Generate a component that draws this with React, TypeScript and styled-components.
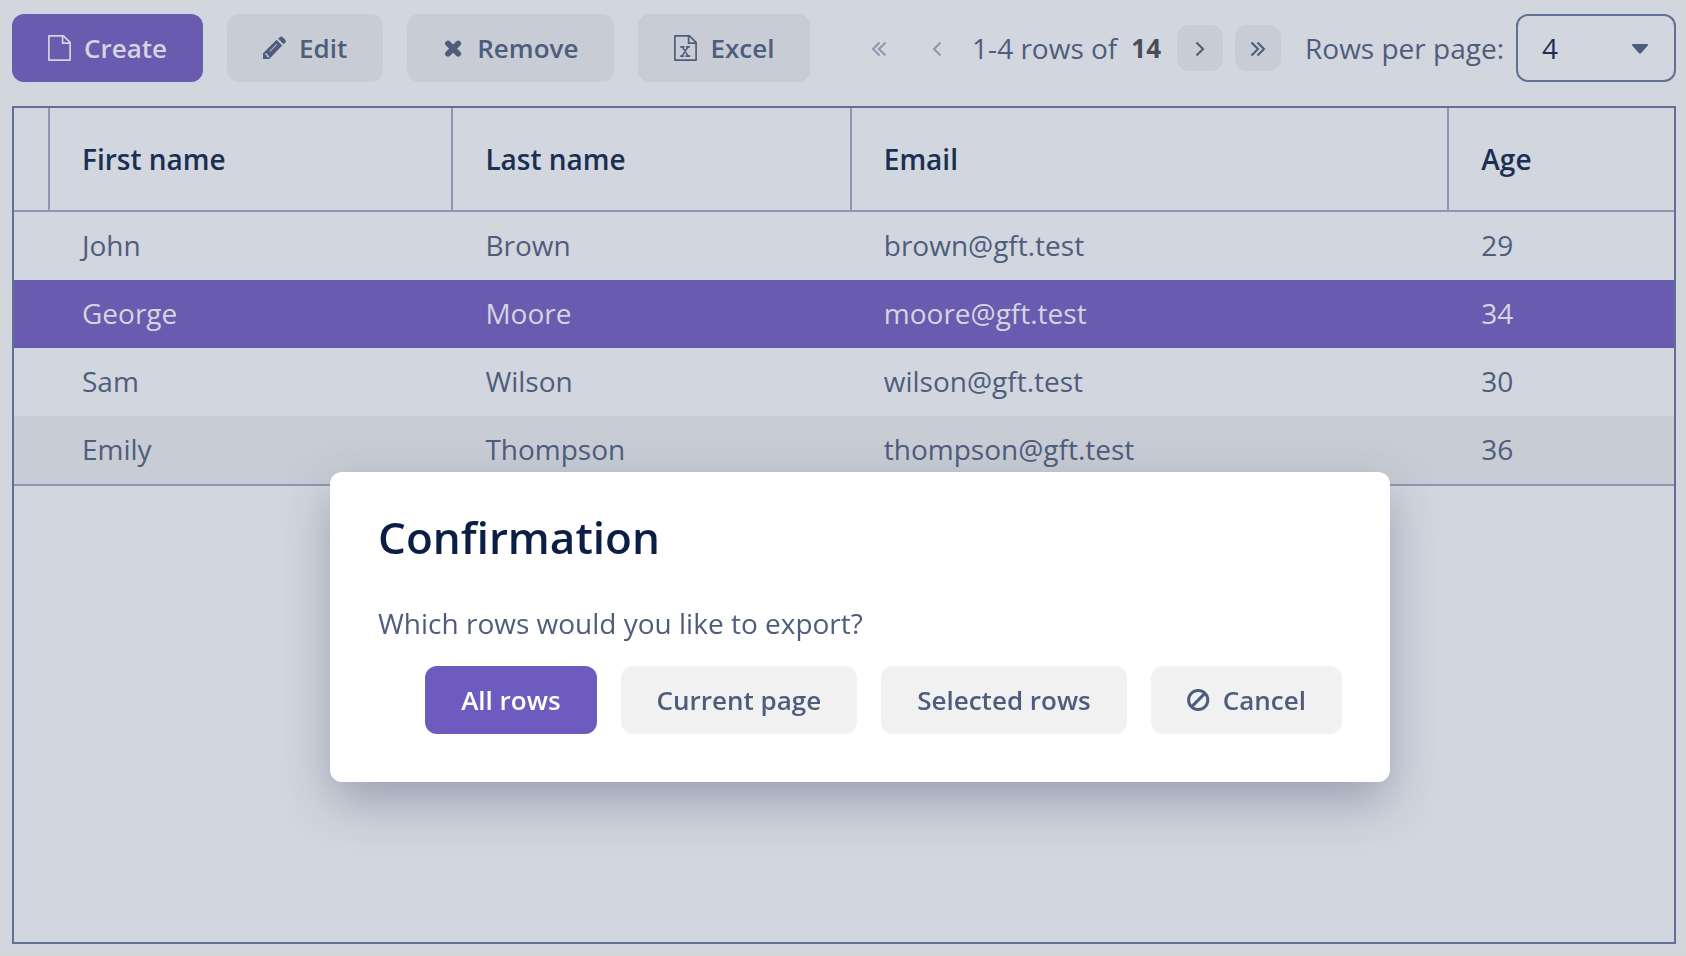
import React from 'react';
import styled, { createGlobalStyle, css } from 'styled-components';

const GlobalStyle = createGlobalStyle`
  *, *::before, *::after { box-sizing: border-box; }
  body {
    margin: 0;
    font-family: 'Open Sans', 'Noto Sans', sans-serif;
    font-size: 28px;
    line-height: 40px;
    color: #4f5d7c;
  }
  button, select { font: inherit; color: inherit; }
`;

const Page = styled.div`
  display: flex;
  flex-direction: column;
  gap: 24px;
  min-height: 100vh;
  padding: 12px 8px 10px 10px;
  border: 2px solid #d4d5d6;
  background: #d2d6de;
`;

const Toolbar = styled.div`
  display: flex;
  align-items: center;
  gap: 24px;
`;

type Tone = 'primary' | 'plain';

const tones = {
  dimmed: {
    primary: css`background: #695bb0; color: #d4d5de;`,
    plain: css`background: #c8ccd4; color: #4f5d7c;`,
  },
  active: {
    primary: css`background: #6e5bc0; color: #ffffff;`,
    plain: css`background: #f1f1f2; color: #4f5d7c;`,
  },
};

const Button = styled.button<{ $tone?: Tone; $active?: boolean }>`
  display: inline-flex;
  align-items: center;
  gap: 12px;
  height: 68px;
  padding: 0 36px;
  border: 0;
  border-radius: 12px;
  font-size: 26px;
  font-weight: 600;
  white-space: nowrap;
  ${({ $tone = 'plain', $active }) => tones[$active ? 'active' : 'dimmed'][$tone]}
`;

const Pager = styled.nav`
  display: flex;
  align-items: center;
  gap: 12px;
  margin-left: auto;
  white-space: nowrap;
`;

const PagerButton = styled.button`
  display: grid;
  place-items: center;
  width: 46px;
  height: 46px;
  padding: 0;
  border: 0;
  border-radius: 12px;
  background: #c8ccd4;

  &:disabled {
    background: transparent;
    color: #8d98b3;
  }
`;

const Range = styled.span`
  display: flex;
  align-items: center;
  gap: 14px;
  padding-right: 4px;
`;

const Total = styled.strong`
  font-size: 26px;
  font-weight: 700;
  color: #4a4d55;
`;

const PageSize = styled.div`
  display: flex;
  align-items: center;
  gap: 12px;
  padding-left: 12px;
`;

const SelectBox = styled.div`
  display: grid;
  grid-template-columns: 160px;
  align-items: center;

  > * { grid-area: 1 / 1; }
  > svg { justify-self: end; margin-right: 28px; color: #4f5d7c; pointer-events: none; }
`;

const Select = styled.select`
  height: 68px;
  padding: 0 24px;
  border: 2px solid #606f93;
  border-radius: 12px;
  background: transparent;
  color: #1b2f52;
  appearance: none;
`;

const GridFrame = styled.section`
  flex: 1;
  border: 2px solid #606f93;
`;

const Table = styled.table`
  width: 100%;
  table-layout: fixed;
  border-collapse: separate;
  border-spacing: 0;
  text-align: left;
`;

const Column = styled.col<{ $width: string }>`
  width: ${({ $width }) => $width};
`;

const HeaderCell = styled.th`
  height: 104px;
  padding: 0 32px;
  border-bottom: 2px solid #8c98b2;
  font-weight: 600;
  color: #1b2f52;

  &:not(:last-child) { border-right: 2px solid #8c98b2; }
  &:first-child { padding: 0; }
`;

type RowState = 'selected' | 'hovered' | 'normal';

const Row = styled.tr<{ $state: RowState }>`
  ${({ $state }) => $state === 'selected' && css`background: #695bb0; color: #d4d5de;`}
  ${({ $state }) => $state === 'hovered' && css`background: #c8ccd4;`}

  &:last-child > td { height: 70px; border-bottom: 2px solid #8c98b2; }
`;

const Cell = styled.td`
  height: 68px;
  padding: 0 32px 2px;

  &:first-child { padding: 0; }
`;

const Overlay = styled.div`
  position: fixed;
  inset: 0;
  display: flex;
  align-items: flex-start;
  justify-content: center;
  padding: 472px 0 0 34px;
`;

const Dialog = styled.div`
  width: 1060px;
  max-width: 100%;
  padding: 43px 48px 48px;
  border-radius: 12px;
  background: #ffffff;
  box-shadow: 0 20px 50px -2px rgba(54, 68, 100, 0.38);
`;

const DialogTitle = styled.h2`
  margin: 0 0 44px;
  font-size: 44px;
  font-weight: 600;
  line-height: 44px;
  color: #0b1f45;
`;

const DialogText = styled.p`
  margin: 0 0 23px;
`;

const DialogActions = styled.div`
  display: flex;
  justify-content: flex-end;
  gap: 24px;
`;

const FileIcon = ({ sheet = false }: { sheet?: boolean }) => (
  <svg width="24" height="28" viewBox="0 0 24 28" fill="none" stroke="currentColor" strokeWidth="1.7" strokeLinejoin="round" aria-hidden="true">
    <path d="M.9 1.9h14.6l6.6 6.4v17.8H.9z" />
    <path d="M14.6 2v7.2H22" />
    {sheet && <path d="M6.2 12.9h4.400M12 12.9h3.800M6.200 22.1h3.800M11.400 22.1h4.800M8.300 12.9l5.900 9.200M14 12.900l-6 9.200" strokeWidth="1.6" />}
  </svg>
);

const PencilIcon = () => (
  <svg width="24" height="24" viewBox="0 0 24 24" aria-hidden="true">
    <path fill="currentColor" fillRule="evenodd" d="M13.6 3.800l5.600 5.600L6.200 23H0v-5.800zM2.400 17.600v1.500l1.600.3.3 1.800 1.300.2.7-.7-3.100-3.800zM6.300 15.200l.6.6 7.200-7.100-.6-.6z" />
    <path fill="currentColor" d="M15.200 2.800l1.900-1.700q1.300-1 2.500 0l2.800 2.800q1.200 1.300 0 2.500l-1.900 1.800z" />
  </svg>
);

const CrossIcon = () => (
  <svg width="22" height="22" viewBox="0 0 22 22" aria-hidden="true">
    <path d="M5 6.500l10.200 10.200M15.200 6.500L5 16.700" stroke="currentColor" strokeWidth="5.8" strokeLinecap="round" />
  </svg>
);

const BanIcon = () => (
  <svg width="24" height="24" viewBox="0 0 24 24" fill="none" stroke="currentColor" strokeWidth="3" aria-hidden="true">
    <circle cx="11.2" cy="12" r="9.6" />
    <path d="M4.800 18.600L17.800 5.400" />
  </svg>
);

const CaretIcon = () => (
  <svg width="16" height="12" viewBox="0 0 16 12" aria-hidden="true">
    <path fill="currentColor" d="M1 2h14q1.600.4.600 1.800L9.200 11q-1.200 1-2.400 0L.4 3.800Q-.6 2.400 1 2z" />
  </svg>
);

const chevrons = {
  first: 'M8.500 2.500L2 9l6.500 6.500M14.500 2.500L8 9l6.500 6.500',
  previous: 'M11.500 2.500L5 9l6.500 6.500',
  next: 'M4.500 2.500L11 9l-6.500 6.500',
  last: 'M1.500 2.500L8 9l-6.500 6.500M7.500 2.500L14 9l-6.500 6.500',
};

const Chevron = ({ kind }: { kind: keyof typeof chevrons }) => (
  <svg width="16" height="16" viewBox="0 0 16 16" overflow="visible" fill="none" stroke="currentColor" strokeWidth="2.1" aria-hidden="true">
    <path d={chevrons[kind]} />
  </svg>
);

const people: { first: string; last: string; email: string; age: number; state: RowState }[] = [
  { first: 'John', last: 'Brown', email: 'brown@gft.test', age: 29, state: 'normal' },
  { first: 'George', last: 'Moore', email: 'moore@gft.test', age: 34, state: 'selected' },
  { first: 'Sam', last: 'Wilson', email: 'wilson@gft.test', age: 30, state: 'normal' },
  { first: 'Emily', last: 'Thompson', email: 'thompson@gft.test', age: 36, state: 'hovered' },
];

export default function App() {
  return (
    <>
      <GlobalStyle />
      <Page>
        <Toolbar>
          <Button $tone="primary"><FileIcon />Create</Button>
          <Button><PencilIcon />Edit</Button>
          <Button><CrossIcon />Remove</Button>
          <Button><FileIcon sheet />Excel</Button>
          <Pager aria-label="Pages">
            <PagerButton disabled aria-label="First page"><Chevron kind="first" /></PagerButton>
            <PagerButton disabled aria-label="Previous page"><Chevron kind="previous" /></PagerButton>
            <Range>1-4 rows of <Total>14</Total></Range>
            <PagerButton aria-label="Next page"><Chevron kind="next" /></PagerButton>
            <PagerButton aria-label="Last page"><Chevron kind="last" /></PagerButton>
            <PageSize>
              <label htmlFor="page-size">Rows per page:</label>
              <SelectBox>
                <Select id="page-size" defaultValue="4">
                  <option>4</option>
                </Select>
                <CaretIcon />
              </SelectBox>
            </PageSize>
          </Pager>
        </Toolbar>

        <GridFrame>
          <Table>
            <colgroup>
              <Column $width="36px" />
              <Column $width="24.3%" />
              <Column $width="24%" />
              <Column $width="36%" />
              <Column $width="auto" />
            </colgroup>
            <thead>
              <tr>
                <HeaderCell />
                <HeaderCell>First name</HeaderCell>
                <HeaderCell>Last name</HeaderCell>
                <HeaderCell>Email</HeaderCell>
                <HeaderCell>Age</HeaderCell>
              </tr>
            </thead>
            <tbody>
              {people.map((person) => (
                <Row key={person.email} $state={person.state}>
                  <Cell />
                  <Cell>{person.first}</Cell>
                  <Cell>{person.last}</Cell>
                  <Cell>{person.email}</Cell>
                  <Cell>{person.age}</Cell>
                </Row>
              ))}
            </tbody>
          </Table>
        </GridFrame>
      </Page>

      <Overlay>
        <Dialog role="dialog" aria-modal="true" aria-labelledby="dialog-title">
          <DialogTitle id="dialog-title">Confirmation</DialogTitle>
          <DialogText>Which rows would you like to export?</DialogText>
          <DialogActions>
            <Button $active $tone="primary">All rows</Button>
            <Button $active>Current page</Button>
            <Button $active>Selected rows</Button>
            <Button $active><BanIcon />Cancel</Button>
          </DialogActions>
        </Dialog>
      </Overlay>
    </>
  );
}
